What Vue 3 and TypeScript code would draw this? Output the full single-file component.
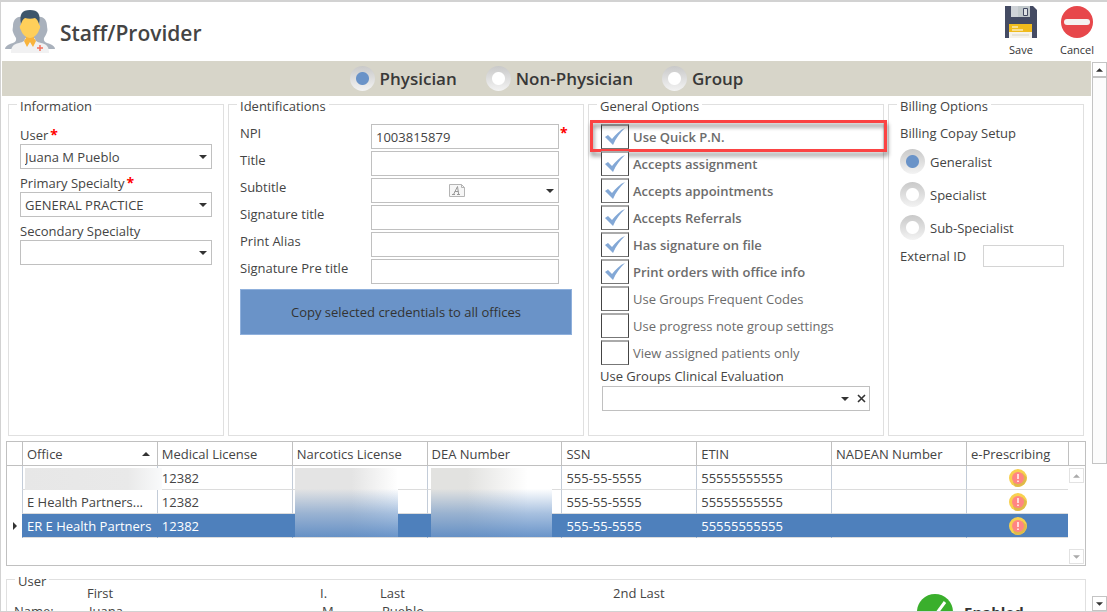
<script setup lang="ts">
import { ref } from 'vue'

interface Option {
  label: string
  checked: boolean
  highlighted?: boolean
}

interface OfficeRow {
  office: string
  license: string
  ssn: string
  etin: string
  selected?: boolean
}

const providerTypes = ['Physician', 'Non-Physician', 'Group']
const providerType = ref('Physician')

const copayTypes = ['Generalist', 'Specialist', 'Sub-Specialist']
const copayType = ref('Generalist')
const externalId = ref('')

const user = ref('Juana M Pueblo')
const primary = ref('GENERAL PRACTICE')
const secondary = ref('')

const npi = ref('1003815879')
const title = ref('')
const subtitle = ref('')
const signatureTitle = ref('')
const printAlias = ref('')
const signaturePreTitle = ref('')

const options = ref<Option[]>([
  { label: 'Use Quick P.N.', checked: true, highlighted: true },
  { label: 'Accepts assignment', checked: true },
  { label: 'Accepts appointments', checked: true },
  { label: 'Accepts Referrals', checked: true },
  { label: 'Has signature on file', checked: true },
  { label: 'Print orders with office info', checked: true },
  { label: 'Use Groups Frequent Codes', checked: false },
  { label: 'Use progress note group settings', checked: false },
  { label: 'View assigned patients only', checked: false },
])
const evaluation = ref('')

const columns = [
  'Medical License',
  'Narcotics License',
  'DEA Number',
  'SSN',
  'ETIN',
  'NADEAN Number',
  'e-Prescribing',
]

const rows: OfficeRow[] = [
  { office: '', license: '12382', ssn: '555-55-5555', etin: '55555555555' },
  { office: 'E Health Partners...', license: '12382', ssn: '555-55-5555', etin: '55555555555' },
  { office: 'ER E Health Partners', license: '12382', ssn: '555-55-5555', etin: '55555555555', selected: true },
]
</script>

<template>
  <div class="window">
    <header class="header">
      <svg class="logo" viewBox="0 0 50 44" aria-hidden="true">
        <g fill="#a9b1bc">
          <path d="M17 7c-6-1-9 4-9 9 0 2-1 4 0 6 1 3 2 4 3 6 1 4-3 5-6 6-3 1-5 3-5 5h25V10z" />
          <path d="M33 7c6-1 9 4 9 9 0 2 1 4 0 6-1 3-2 4-3 6-1 4 3 5 6 6 3 1 5 3 5 5H25V10z" />
        </g>
        <path d="M6 43c0-6 2-9 8-10 4-1 6-2 6-5h10c0 3 2 4 6 5 6 1 8 4 8 10z" fill="#f1f1f2" />
        <path d="M21 23h8v5l2 3-3 6-3-5-3 5-3-6 2-3z" fill="#f9b43c" />
        <path d="M16 8h18v7c2 0 1 4 0 5-1 4-5 8-9 8s-8-4-9-8c-1-1-2-5 0-5z" fill="#ffcf5a" />
        <path d="M16 14C14 4 17 0 25 0s11 4 9 14c-1-3-2-5-4-6-3 1-7 1-10 0-2 1-3 3-4 6z" fill="#3d566b" />
        <path d="M35 35v6M32 38h6" stroke="#f4705c" stroke-width="1.500" fill="none" />
      </svg>
      <h1 class="title">Staff/Provider</h1>
      <div class="actions">
        <button type="button" class="action">
          <svg viewBox="0 0 32 32" aria-hidden="true">
            <path d="M0 0h28l4 4v28H0z" fill="#444b63" />
            <path d="M6 0h19v11H6z" fill="#cfd3d8" />
            <path d="M13 0h12v11H13z" fill="#c2c9cc" />
            <path d="M18.500 2.500h4v7h-4z" fill="#dfe2e5" stroke="#444b63" />
            <path d="M4 18h23v14H4z" fill="#f5f2ea" />
            <path d="M4 18h23v8H4z" fill="#f0bb1c" />
            <path d="M7 21h6M7 24h11" stroke="#fff" stroke-width="1.200" />
            <path d="M7 29h17" stroke="#d9d5c8" />
          </svg>
          Save
        </button>
        <button type="button" class="action">
          <svg viewBox="0 0 32 32" aria-hidden="true">
            <circle cx="16" cy="16" r="16" fill="#e7474b" />
            <rect x="3" y="13" width="26" height="6" rx="3" fill="#f5f2f1" />
          </svg>
          Cancel
        </button>
      </div>
    </header>

    <div class="body">
      <main class="content">
        <div class="type-bar" role="radiogroup" aria-label="Provider type">
          <label v-for="t in providerTypes" :key="t" class="radio-label type">
            <input v-model="providerType" class="radio" type="radio" name="type" :value="t" />
            {{ t }}
          </label>
        </div>

        <div class="panels">
          <fieldset class="panel">
            <legend>Information</legend>
            <div class="stack">
              <label for="user">User<span class="star">*</span></label>
              <div class="combo">
                <select id="user" v-model="user"><option>Juana M Pueblo</option></select>
                <svg class="caret" viewBox="0 0 8 4" aria-hidden="true"><path d="M0 0h8L4 4z" /></svg>
              </div>
              <label for="primary">Primary Specialty<span class="star">*</span></label>
              <div class="combo">
                <select id="primary" v-model="primary"><option>GENERAL PRACTICE</option></select>
                <svg class="caret" viewBox="0 0 8 4" aria-hidden="true"><path d="M0 0h8L4 4z" /></svg>
              </div>
              <label for="secondary">Secondary Specialty</label>
              <div class="combo">
                <select id="secondary" v-model="secondary"><option value=""></option></select>
                <svg class="caret" viewBox="0 0 8 4" aria-hidden="true"><path d="M0 0h8L4 4z" /></svg>
              </div>
            </div>
          </fieldset>

          <fieldset class="panel">
            <legend>Identifications</legend>
            <div class="ids">
              <label for="npi">NPI</label>
              <input id="npi" v-model="npi" type="text" />
              <span class="star">*</span>
              <label for="title">Title</label>
              <input id="title" v-model="title" type="text" />
              <label for="subtitle">Subtitle</label>
              <div class="combo">
                <select id="subtitle" v-model="subtitle"><option value=""></option></select>
                <svg class="doc" viewBox="0 0 16 13" aria-hidden="true">
                  <path d="M.5.5h12l3 3v9H.5z" fill="#f6f6f6" stroke="#b4b4b4" />
                  <path d="M12.500.5v3h3" fill="none" stroke="#b4b4b4" />
                  <path d="M3 10.500h3M8 10.500h3M4.500 10.500l4-8 1.200 8M5.800 7.500h3.500" fill="none" stroke="#999" />
                </svg>
                <svg class="caret" viewBox="0 0 8 4" aria-hidden="true"><path d="M0 0h8L4 4z" /></svg>
              </div>
              <label for="sigtitle">Signature title</label>
              <input id="sigtitle" v-model="signatureTitle" type="text" />
              <label for="alias">Print Alias</label>
              <input id="alias" v-model="printAlias" type="text" />
              <label for="pretitle">Signature Pre title</label>
              <input id="pretitle" v-model="signaturePreTitle" type="text" />
            </div>
            <button type="button" class="copy">Copy selected credentials to all offices</button>
          </fieldset>

          <fieldset class="panel">
            <legend>General Options</legend>
            <div class="options">
              <div v-for="o in options" :key="o.label" class="option">
                <label :class="{ on: o.checked }">
                  <span class="box">
                    <input v-model="o.checked" type="checkbox" />
                    <svg v-if="o.checked" class="tick" viewBox="0 0 20 17" aria-hidden="true">
                      <path d="M0 9l3-2 4 4C11 6 15 2 20 0 15 5 11 10 8 17z" />
                    </svg>
                  </span>
                  {{ o.label }}
                </label>
                <div v-if="o.highlighted" class="highlight"></div>
              </div>
            </div>
            <label class="eval-label" for="evaluation">Use Groups Clinical Evaluation</label>
            <div class="combo clearable">
              <select id="evaluation" v-model="evaluation"><option value=""></option></select>
              <svg class="caret" viewBox="0 0 8 4" aria-hidden="true"><path d="M0 0h8L4 4z" /></svg>
              <button type="button" class="clear" aria-label="Clear" @click="evaluation = ''">
                <svg viewBox="0 0 9 9" aria-hidden="true"><path d="M1 1l7 7M8 1l-7 7" stroke="#333" stroke-width="1.600" /></svg>
              </button>
            </div>
          </fieldset>

          <fieldset class="panel">
            <legend>Billing Options</legend>
            <div class="billing" role="radiogroup" aria-labelledby="copay">
              <div id="copay" class="copay">Billing Copay Setup</div>
              <label v-for="c in copayTypes" :key="c" class="radio-label">
                <input v-model="copayType" class="radio" type="radio" name="copay" :value="c" />
                {{ c }}
              </label>
            </div>
            <div class="external">
              <label for="external">External ID</label>
              <input id="external" v-model="externalId" type="text" />
            </div>
          </fieldset>
        </div>

        <div class="grid">
          <table>
            <colgroup>
              <col class="c-mark" />
              <col /><col /><col /><col />
              <col /><col /><col />
              <col class="c-last" />
            </colgroup>
            <thead>
              <tr>
                <th></th>
                <th>
                  <div class="sorted">
                    Office
                    <svg viewBox="0 0 8 4" aria-hidden="true"><path d="M0 4h8L4 0z" /></svg>
                  </div>
                </th>
                <th v-for="c in columns" :key="c">{{ c }}</th>
              </tr>
            </thead>
            <tbody>
              <tr v-for="(r, i) in rows" :key="i" :class="{ selected: r.selected }">
                <td class="mark">
                  <svg v-if="r.selected" viewBox="0 0 4 8" aria-hidden="true"><path d="M0 0v8l4-4z" /></svg>
                </td>
                <td>{{ r.office }}<span v-if="i === 0" class="mask mask-office"></span></td>
                <td>{{ r.license }}</td>
                <td><span v-if="i === 0" class="mask mask-narcotics"></span></td>
                <td><span v-if="i === 0" class="mask mask-dea"></span></td>
                <td>{{ r.ssn }}</td>
                <td>{{ r.etin }}</td>
                <td></td>
                <td class="status">
                  <svg viewBox="0 0 18 18" role="img" aria-label="Alert">
                    <circle cx="9" cy="9" r="9" fill="#f8d04f" />
                    <path d="M13 4l4.500 4A9 9 0 0 1 6 17.500L4 13z" fill="#dfb94a" />
                    <circle cx="9" cy="9" r="6" fill="#ff8583" />
                    <path d="M9 5v5M9 11.500v1.500" stroke="#fff" stroke-width="1.400" />
                  </svg>
                </td>
              </tr>
            </tbody>
          </table>
          <div class="grid-side">
            <div class="side-head"></div>
            <button type="button" aria-label="Scroll rows up"><svg viewBox="0 0 8 4"><path d="M0 4h8L4 0z" /></svg></button>
            <button type="button" aria-label="Scroll rows down" class="down"><svg viewBox="0 0 8 4"><path d="M0 0h8L4 4z" /></svg></button>
          </div>
        </div>

        <fieldset class="panel user-panel">
          <legend>User</legend>
          <div class="names">
            <span class="head">First</span><span>I.</span><span>Last</span><span>2nd Last</span>
            <span class="row-name">Name:</span><span class="val">Juana</span><span class="val">M</span><span class="val">Pueblo</span>
            <span class="enabled">
              <svg viewBox="0 0 36 36" aria-hidden="true">
                <circle cx="18" cy="18" r="18" fill="#3aaf2c" />
                <path d="M8 20l6 7L28 8" fill="none" stroke="#fff" stroke-width="3" />
              </svg>
              Enabled
            </span>
          </div>
        </fieldset>
      </main>

      <div class="scrollbar">
        <button type="button" aria-label="Scroll up"><svg viewBox="0 0 8 4"><path d="M0 4h8L4 0z" /></svg></button>
        <div class="thumb"></div>
        <div class="track"></div>
        <button type="button" aria-label="Scroll down"><svg viewBox="0 0 8 4"><path d="M0 0h8L4 4z" /></svg></button>
      </div>
    </div>
  </div>
</template>

<style>
body {
  margin: 0;
}
</style>

<style scoped>
* {
  box-sizing: border-box;
}
.window {
  display: flex;
  flex-direction: column;
  height: 100vh;
  overflow: hidden;
  border: solid #d2d2d2;
  border-width: 2px 0 1px 1px;
  background: #fff;
  color: #444;
  font: 13px/18px 'Open Sans', 'Noto Sans', sans-serif;
}
button,
input,
select {
  margin: 0;
  color: inherit;
  font: inherit;
}
.header {
  display: flex;
  flex: none;
  align-items: flex-start;
  height: 59px;
  padding: 4px 12px 0 4px;
}
.logo {
  width: 50px;
  height: 44px;
  margin-top: 4px;
}
.title {
  flex: 1;
  margin: 12px 0 0 5px;
  font-size: 21px;
  font-weight: 600;
  line-height: 30px;
}
.actions {
  display: flex;
  gap: 20px;
}
.action {
  display: flex;
  flex-direction: column;
  align-items: center;
  width: 36px;
  padding: 0;
  border: 0;
  background: none;
  color: #333;
  font-size: 11px;
  line-height: 24px;
}
.action svg {
  width: 32px;
  height: 32px;
}
.body {
  display: flex;
  flex: 1;
  min-height: 0;
}
.content {
  flex: 1;
  min-width: 0;
  overflow: hidden;
}
.type-bar {
  display: flex;
  justify-content: center;
  gap: 29px;
  height: 35px;
  margin-left: 1px;
  background: #d7d5c9;
}
.radio-label {
  display: flex;
  align-items: center;
  gap: 5px;
}
.type {
  color: #383838;
  font-size: 17px;
  font-weight: 600;
}
.radio {
  width: 25px;
  height: 25px;
  border-radius: 50%;
  appearance: none;
  background:
    radial-gradient(circle, #fff 6px, transparent 7px),
    linear-gradient(#c9c9c9, #f3f3f3);
}
.radio:checked {
  background:
    radial-gradient(circle, #6a93c8 6px, transparent 7px),
    linear-gradient(#c9c9c9, #f3f3f3);
}
.panels {
  display: grid;
  grid-template-columns: 216fr 356fr 296fr 196fr;
  gap: 4px;
  padding: 0 7px;
}
.panel {
  min-width: 0;
  margin: 0;
  padding: 12px 11px 24px;
  border: 1px solid #e0e0e0;
}
.panel legend {
  margin-left: -3px;
  padding: 4px 3px 0;
  line-height: 12px;
}
.star {
  color: #f00;
  font-weight: 700;
  font-size: 14px;
}
.stack label {
  display: block;
  padding-top: 2px;
}
.stack .combo {
  margin-bottom: 3px;
}
.stack .star {
  margin-left: 2px;
  line-height: 16px;
}
input[type='text'],
select {
  display: block;
  width: 100%;
  height: 25px;
  padding: 0 4px;
  border: 1px solid #c0c0c0;
  border-radius: 0;
  outline: 0;
  appearance: none;
  background: #fff;
}
.combo {
  position: relative;
}
.caret {
  position: absolute;
  top: 11px;
  right: 5px;
  width: 8px;
  height: 4px;
  fill: #333;
  pointer-events: none;
}
.doc {
  position: absolute;
  top: 6px;
  left: 78px;
  width: 16px;
  height: 13px;
  pointer-events: none;
}
.ids {
  display: grid;
  grid-template-columns: 131px 1fr 13px;
  row-gap: 2px;
}
.ids label {
  grid-column: 1;
}
.ids .star {
  padding-left: 1px;
}
.copy {
  display: block;
  width: 100%;
  height: 46px;
  margin-top: 5px;
  border: 1px solid #8fb0dc;
  background: #6a93c8;
  color: #333;
}
.options {
  display: grid;
  gap: 2px;
}
.option {
  position: relative;
}
.option label {
  display: flex;
  align-items: center;
  gap: 4px;
  color: #6c6c6c;
}
.option .on {
  font-weight: 600;
}
.box {
  position: relative;
  width: 28px;
  height: 25px;
  margin-left: 1px;
}
.box input {
  display: block;
  width: 28px;
  height: 25px;
  border: 1px solid #444;
  border-top: 2px solid #aaa;
  border-bottom-color: #777;
  appearance: none;
  background: #fff;
}
.tick {
  position: absolute;
  top: 4px;
  left: 4px;
  width: 20px;
  height: 17px;
  fill: #83a8d6;
  pointer-events: none;
}
.highlight {
  position: absolute;
  inset: -4px -15px -3px -10px;
  border: 3px solid #fb4343;
  filter: drop-shadow(1px 4px 2px rgba(0, 0, 0, 0.45));
  pointer-events: none;
}
.eval-label {
  display: block;
  padding-top: 2px;
}
.clearable {
  margin: 1px 2px 0;
}
.clearable .caret {
  right: 21px;
}
.clear {
  position: absolute;
  top: 8px;
  right: 4px;
  display: flex;
  padding: 0;
  border: 0;
  background: none;
}
.clear svg {
  width: 9px;
  height: 9px;
}
.copay {
  margin-bottom: 7px;
}
.billing .radio-label + .radio-label {
  margin-top: 8px;
}
.external {
  display: flex;
  gap: 17px;
  align-items: center;
  margin-top: 5px;
}
.external input[type='text'] {
  width: 81px;
  height: 22px;
  border-color: #d4d4d4;
}
.grid {
  display: flex;
  height: 125px;
  margin: 5px 5px 0;
  border: 1px solid #c0c0c0;
}
table {
  flex: 1;
  width: 100%;
  min-width: 0;
  align-self: flex-start;
  border-collapse: separate;
  border-spacing: 0;
  table-layout: fixed;
}
.c-mark {
  width: 15px;
}
.c-last {
  width: 102px;
}
th,
td {
  position: relative;
  height: 24px;
  padding: 0 0 0 4px;
  border-bottom: 1px solid #dcdcdc;
  border-left: 1px solid #c3ccd8;
  text-align: left;
  white-space: nowrap;
}
th {
  border-color: #c0c0c0;
  font-weight: 400;
}
th:first-child,
td:first-child {
  border-left: 0;
}
td.mark {
  padding: 0 0 0 6px;
  border-bottom: 0;
}
.mark svg {
  display: block;
  width: 4px;
  height: 8px;
  fill: #333;
}
.selected td:not(.mark) {
  border-left-color: #4e80bc;
  background: #4e80bc;
  color: #fff;
}
.sorted {
  display: flex;
  align-items: center;
  justify-content: space-between;
  padding-right: 7px;
}
.sorted svg {
  width: 8px;
  height: 4px;
  fill: #333;
}
td.status {
  padding: 0;
  text-align: center;
}
.status svg {
  display: block;
  width: 18px;
  height: 18px;
  margin: 0 auto;
}
.mask {
  position: absolute;
  z-index: 1;
  top: 2px;
  left: 2px;
}
.mask-office {
  width: 137px;
  height: 22px;
  background: linear-gradient(90deg, #e7e7e7, #e9e9e9 75%, #f9fafb);
}
.mask-narcotics {
  width: 103px;
  height: 69px;
  background:
    linear-gradient(rgba(80, 130, 192, 0) 30%, rgba(80, 130, 192, 0.5) 66%, rgba(80, 130, 192, 0.85)),
    linear-gradient(90deg, #e4e4e4 55%, #fff);
}
.mask-dea {
  left: 3px;
  width: 121px;
  height: 69px;
  background:
    linear-gradient(rgba(80, 130, 192, 0) 30%, rgba(80, 130, 192, 0.5) 66%, rgba(80, 130, 192, 0.85)),
    linear-gradient(90deg, #e2e2e0 30%, #fff 80%);
}
.grid-side {
  display: flex;
  flex: none;
  flex-direction: column;
  width: 17px;
}
.side-head {
  height: 24px;
  margin-bottom: 2px;
  border-bottom: 1px solid #c0c0c0;
  border-left: 1px solid #c0c0c0;
}
.grid-side button,
.scrollbar button {
  display: flex;
  flex: none;
  align-items: center;
  justify-content: center;
  width: 15px;
  height: 15px;
  padding: 0;
  border: 1px solid #c4c4c4;
  background: #fff;
}
.grid-side button {
  margin-left: 1px;
  border-color: #e2e2e2;
}
.grid-side .down {
  margin: auto 0 1px 1px;
}
.grid-side button svg,
.scrollbar button svg {
  width: 7px;
  height: 4px;
  fill: #333;
}
.grid-side button svg {
  fill: #aaa;
}
.user-panel {
  margin: 5px 5px 0;
  padding: 0 7px 24px;
}
.user-panel legend {
  margin-left: 1px;
}
.names {
  display: grid;
  grid-template-columns: 73px 233px 60px 233px 290px 1fr;
  margin-top: -3px;
}
.head {
  grid-column: 2;
}
.row-name {
  grid-column: 1;
}
.val {
  padding-left: 2px;
}
.enabled {
  display: flex;
  grid-column: 6;
  align-items: center;
  gap: 11px;
  height: 36px;
  margin: -8px 0 0 14px;
  color: #333;
  font-size: 15px;
  font-weight: 700;
}
.enabled svg {
  width: 36px;
  height: 36px;
}
.scrollbar {
  display: flex;
  flex: none;
  flex-direction: column;
  width: 15px;
  margin: 1px 0 0 1px;
}
.thumb {
  flex: 386;
  border: 1px solid #c4c4c4;
  background: #fcfcfc;
}
.track {
  flex: 132;
}
</style>
